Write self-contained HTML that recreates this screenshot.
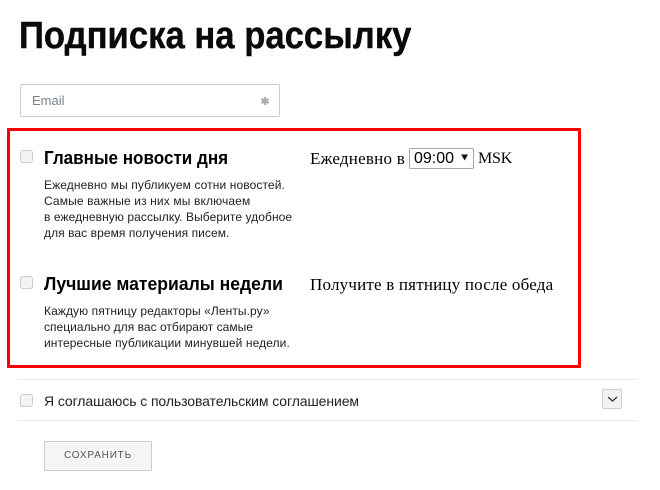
<!DOCTYPE html>
<html lang="ru">
<head>
<meta charset="utf-8">
<style>
html,body{margin:0;padding:0;width:660px;height:490px;background:#fff;overflow:hidden}
body{position:relative;font-family:"Liberation Sans",sans-serif;color:#111}
.a{position:absolute;white-space:nowrap}
.cb{position:absolute;left:20px;width:11px;height:11px;background:#f4f4f4;border:1px solid #ccc;border-radius:3px}
.h{font-weight:bold;font-size:18px;line-height:22px;left:44px;color:#000;transform-origin:0 50%}
.t{font-size:12px;line-height:16px;left:44px;color:#222}
.s{font-family:"Liberation Serif",serif;font-size:17px;line-height:20px;color:#000}
.hr{position:absolute;left:17px;width:620px;height:1px;background:#e9e9e9}
</style>
</head>
<body>
<div class="a" style="left:19px;top:13px;font-size:38px;line-height:46px;font-weight:bold;color:#0a0a0a;transform:scaleX(.912);transform-origin:0 50%;-webkit-text-stroke:.4px #0a0a0a">Подписка на рассылку</div>

<div class="a" style="left:20px;top:84px;width:258px;height:31px;border:1px solid #ccc;border-radius:2px"></div>
<div class="a" style="left:32px;top:93px;font-size:13px;line-height:16px;color:#7b8288">Email</div>
<svg class="a" style="left:260px;top:96px" width="10" height="10" viewBox="0 0 10 10"><path d="M5 1V9M1.500 3L8.500 7M8.500 3L1.500 7" fill="none" stroke="#a9adb2" stroke-width="2.200"/></svg>

<div class="a" style="left:7px;top:128px;width:568px;height:234px;border:3px solid #ff0000;border-radius:1px"></div>

<div class="cb" style="top:150px"></div>
<div class="a h" style="top:147px;transform:scaleX(.948)">Главные новости дня</div>
<div class="a t" style="top:177px;letter-spacing:.1px">Ежедневно мы публикуем сотни новостей.</div>
<div class="a t" style="top:193px;letter-spacing:.13px">Самые важные из них мы включаем</div>
<div class="a t" style="top:209px;letter-spacing:.08px">в ежедневную рассылку. Выберите удобное</div>
<div class="a t" style="top:225px;letter-spacing:.07px">для вас время получения писем.</div>

<div class="a s" style="left:310px;top:149px;letter-spacing:.23px">Ежедневно в</div>
<div class="a" style="left:409px;top:148px;width:63px;height:19px;border:1px solid #a6a6a6;border-radius:2px;background:#fff"></div>
<div class="a" style="left:414px;top:149px;font-size:16px;line-height:19px;color:#000">09:00</div>
<svg class="a" style="left:461px;top:154px" width="8" height="7" viewBox="0 0 8 7"><path d="M0.200 0.500H7L3.600 6.500Z" fill="#111"/></svg>
<div class="a s" style="left:478px;top:149px;font-size:16px;letter-spacing:-.2px">MSK</div>

<div class="cb" style="top:276px"></div>
<div class="a h" style="top:273px;transform:scaleX(.976)">Лучшие материалы недели</div>
<div class="a t" style="top:303px;letter-spacing:.09px">Каждую пятницу редакторы «Ленты.ру»</div>
<div class="a t" style="top:319px;letter-spacing:.03px">специально для вас отбирают самые</div>
<div class="a t" style="top:335px;letter-spacing:.1px">интересные публикации минувшей недели.</div>

<div class="a s" style="left:310px;top:275px;letter-spacing:.2px">Получите в пятницу после обеда</div>

<div class="hr" style="top:379px"></div>
<div class="cb" style="top:394px"></div>
<div class="a" style="left:44px;top:393px;font-size:14px;line-height:16px;color:#222;letter-spacing:-.09px">Я соглашаюсь с пользовательским соглашением</div>
<div class="a" style="left:602px;top:389px;width:18px;height:18px;background:#f3f3f3;border:1px solid #ccc;border-radius:2px"></div>
<svg class="a" style="left:607px;top:396px" width="11" height="6" viewBox="0 0 11 6"><path d="M1 1L5.500 5L10 1" fill="none" stroke="#333" stroke-width="1.300"/></svg>
<div class="hr" style="top:420px"></div>

<div class="a" style="left:44px;top:441px;width:106px;height:28px;background:#f5f5f5;border:1px solid #ccc;border-radius:2px"></div>
<div class="a" style="left:64px;top:449px;font-size:10px;line-height:14px;letter-spacing:.8px;color:#555">СОХРАНИТЬ</div>
</body>
</html>
